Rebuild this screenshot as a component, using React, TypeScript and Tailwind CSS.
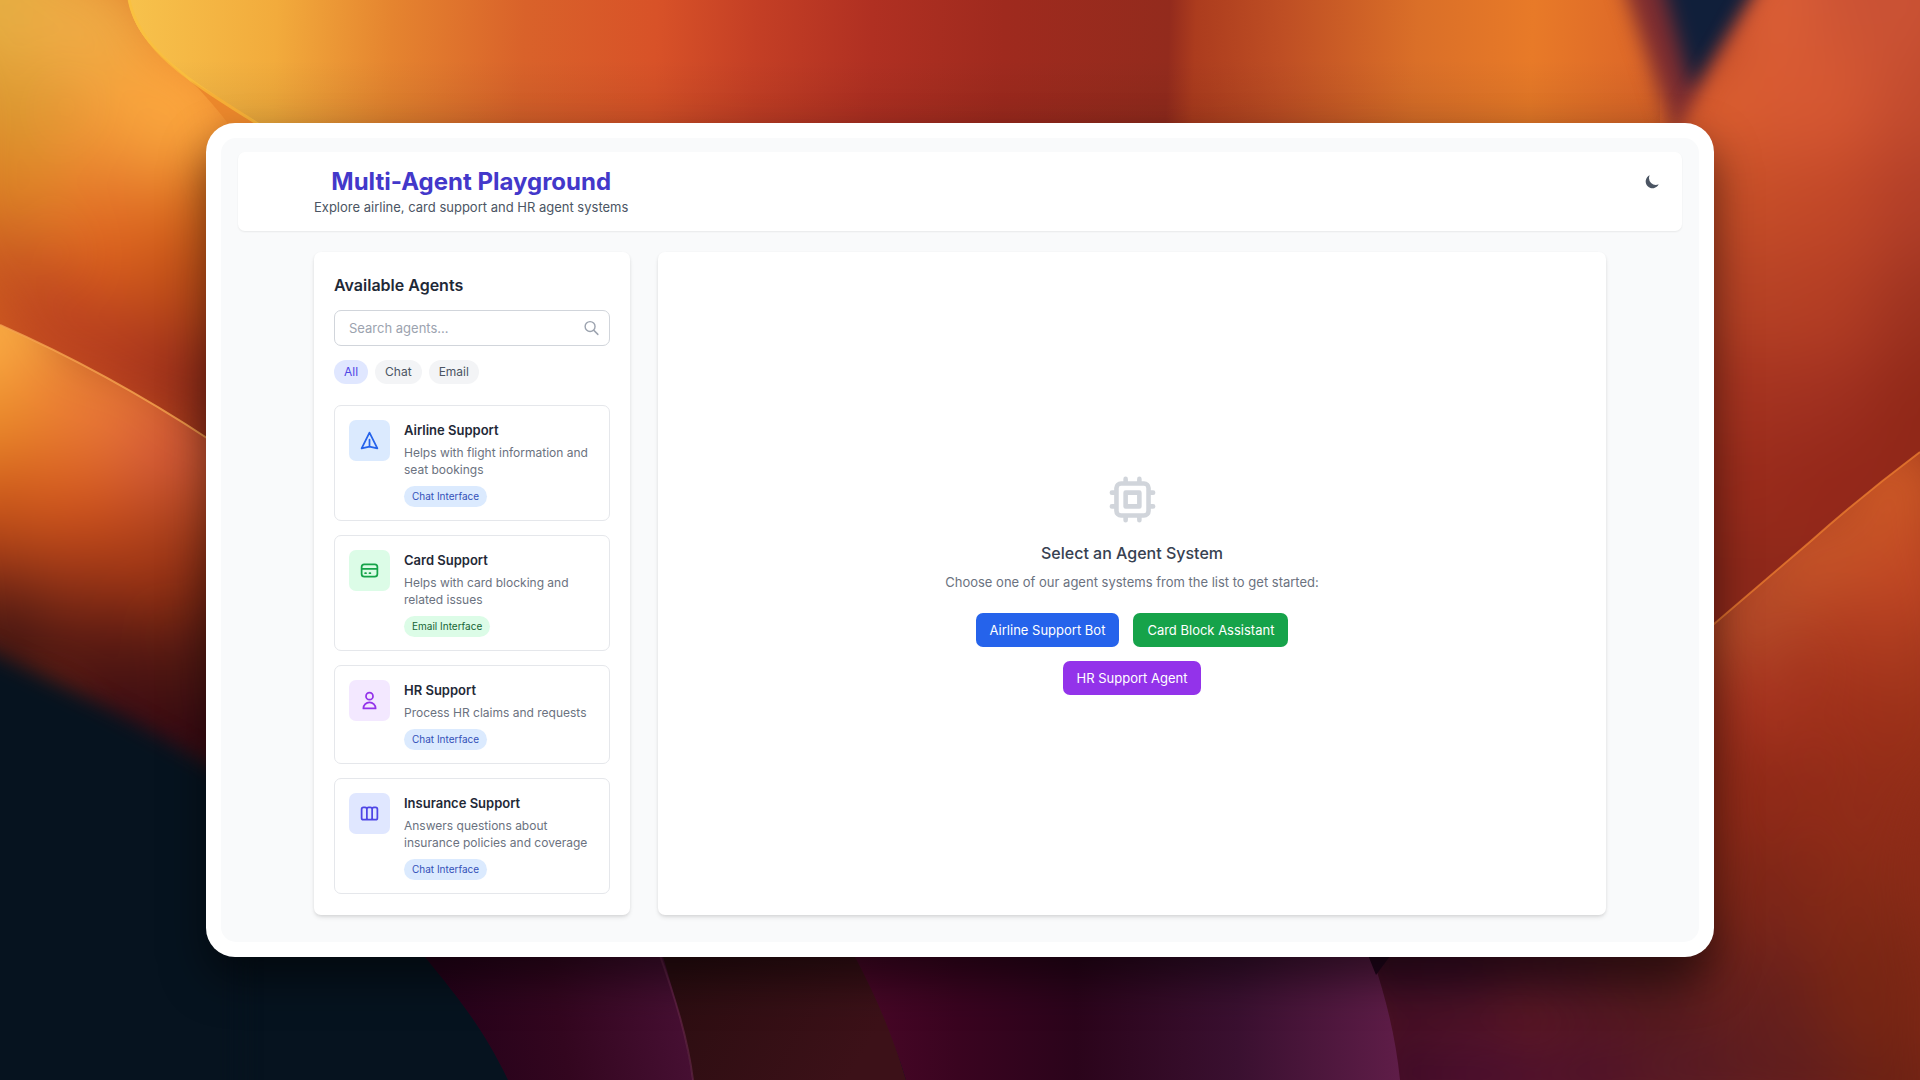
import React, { useState } from "react";

type Blob = [x: number, y: number, r: number, color: string];

interface RegionProps {
  id: string;
  d: string;
  base: string;
  blobs: Blob[];
  soft?: boolean;
}

/* A fold of the wallpaper: a flat shape with soft colour pools clipped to it. */
function Region({ id, d, base, blobs, soft }: RegionProps) {
  return (
    <g filter={soft ? "url(#edge)" : undefined}>
      <clipPath id={id}>
        <path d={d} />
      </clipPath>
      <g clipPath={`url(#${id})`}>
        <path d={d} fill={base} />
        <g filter="url(#pool)">
          {blobs.map(([x, y, r, color], i) => (
            <circle key={i} cx={x} cy={y} r={r} fill={color} />
          ))}
        </g>
      </g>
    </g>
  );
}

function Wallpaper() {
  return (
    <svg
      className="absolute inset-0 h-full w-full"
      viewBox="0 0 1920 1080"
      preserveAspectRatio="xMidYMid slice"
      aria-hidden="true"
    >
      <defs>
        <filter id="pool" filterUnits="userSpaceOnUse" x="-200" y="-200" width="2320" height="1480" colorInterpolationFilters="sRGB">
          <feGaussianBlur stdDeviation="32" />
        </filter>
        <filter id="edge" filterUnits="userSpaceOnUse" x="-200" y="-200" width="2320" height="1480" colorInterpolationFilters="sRGB">
          <feGaussianBlur stdDeviation="10" />
        </filter>
        <linearGradient id="top" gradientUnits="userSpaceOnUse" x1="128" y1="0" x2="1780" y2="60">
          <stop offset="0" stopColor="#f7c24c" />
          <stop offset="0.09" stopColor="#f2ab3c" />
          <stop offset="0.16" stopColor="#e5842f" />
          <stop offset="0.24" stopColor="#d9622a" />
          <stop offset="0.32" stopColor="#d85228" />
          <stop offset="0.38" stopColor="#c43f25" />
          <stop offset="0.45" stopColor="#b03022" />
          <stop offset="0.53" stopColor="#9f2a1e" />
          <stop offset="0.63" stopColor="#932b1d" />
          <stop offset="0.646" stopColor="#ac3c1e" />
          <stop offset="0.7" stopColor="#bf4f24" />
          <stop offset="0.78" stopColor="#da6f28" />
          <stop offset="0.85" stopColor="#e87a28" />
          <stop offset="0.92" stopColor="#dc6628" />
          <stop offset="1" stopColor="#c04c28" />
        </linearGradient>
        <linearGradient id="topShade" x1="0" y1="0" x2="0" y2="1">
          <stop offset="0" stopColor="#000" stopOpacity="0" />
          <stop offset="0.3" stopColor="#000" stopOpacity="0" />
          <stop offset="1" stopColor="#000" stopOpacity="0.16" />
        </linearGradient>
        <linearGradient id="plumA" gradientUnits="userSpaceOnUse" x1="450" y1="1030" x2="690" y2="990">
          <stop offset="0" stopColor="#26021a" />
          <stop offset="0.45" stopColor="#33061f" />
          <stop offset="1" stopColor="#481034" />
        </linearGradient>
        <linearGradient id="plumB" gradientUnits="userSpaceOnUse" x1="680" y1="960" x2="860" y2="1060">
          <stop offset="0" stopColor="#2c0d11" />
          <stop offset="1" stopColor="#3c1118" />
        </linearGradient>
        <linearGradient id="plumC" gradientUnits="userSpaceOnUse" x1="860" y1="1020" x2="1400" y2="1020">
          <stop offset="0" stopColor="#480727" />
          <stop offset="0.18" stopColor="#3a0420" />
          <stop offset="0.4" stopColor="#2b041b" />
          <stop offset="0.7" stopColor="#3a1030" />
          <stop offset="1" stopColor="#5f1d48" />
        </linearGradient>
      </defs>

      <rect width="1920" height="1080" fill="#06131f" />

      {/* Upper band */}
      <rect x="100" width="1760" height="200" fill="url(#top)" />
      <rect x="100" width="1560" height="200" fill="url(#topShade)" />

      {/* Left fold */}
      <Region
        id="left"
        d="M0 0H128C133 28 150 46 166 60C186 78 212 98 244 136V600H0Z"
        base="#d8641f"
        blobs={[
          [0, 0, 90, "#e4ae42"],
          [90, 30, 70, "#eeaa44"],
          [0, 120, 60, "#dc9a32"],
          [170, 120, 80, "#fba63e"],
          [100, 150, 50, "#f09a38"],
          [0, 200, 60, "#db8226"],
          [110, 220, 60, "#e4762a"],
          [220, 220, 60, "#d8681c"],
          [0, 270, 50, "#c85820"],
          [120, 280, 60, "#da601c"],
          [200, 300, 60, "#bc4c18"],
          [60, 330, 60, "#bd4520"],
          [140, 370, 60, "#b03a1e"],
          [220, 390, 60, "#8c2a18"],
          [220, 470, 50, "#8a2a1a"],
        ]}
      />
      <path d="M190 80C204 94 218 110 230 126H262C236 108 210 92 190 80Z" fill="#ec882c" />
      <path d="M129 0C134 24 148 42 162 56C184 78 220 100 258 124" fill="none" stroke="#fbc03c" strokeWidth="3" opacity="0.7" />

      {/* Lower left swoosh */}
      <Region
        id="swoosh"
        d="M0 325C70 356 140 394 210 440V820H0Z"
        base="#8a3014"
        blobs={[
          [110, 440, 90, "#e07030"],
          [-20, 450, 100, "#e88a2c"],
          [60, 540, 90, "#c04c1c"],
          [180, 540, 80, "#a83c1c"],
          [-20, 340, 90, "#f9aa42"],
          [70, 390, 50, "#ee8436"],
          [-10, 440, 60, "#ea8a2a"],
          [110, 430, 50, "#e87838"],
          [180, 460, 60, "#d65c38"],
          [230, 460, 50, "#c85434"],
          [60, 480, 50, "#e06c28"],
          [-10, 520, 60, "#cc581a"],
          [90, 530, 50, "#cc501c"],
          [190, 530, 50, "#b04420"],
          [-10, 580, 50, "#963416"],
          [80, 585, 45, "#983416"],
          [150, 580, 45, "#a03614"],
          [220, 590, 45, "#7c2814"],
          [0, 650, 60, "#441612"],
          [110, 665, 60, "#541812"],
          [210, 665, 50, "#4a1612"],
          [120, 740, 60, "#3a0c14"],
          [215, 750, 50, "#300612"],
        ]}
      />
      <path d="M0 325C70 356 140 394 210 440" fill="none" stroke="#f6a650" strokeWidth="2" opacity="0.8" />
      <g filter="url(#edge)">
        <path d="M-60 628C20 664 120 710 240 782V1140H-60Z" fill="#06131f" />
      </g>

      {/* Navy gap between the upper band and the right fold */}
      <g filter="url(#edge)">
        <path d="M1615 -40H1790L1680 150Z" fill="#7c2c30" />
        <path d="M1655 -40H1780L1692 92Z" fill="#101f3a" />
      </g>

      {/* Right fold */}
      <Region
        id="right"
        soft
        d="M1776 -40L1672 140V760H1980V-40Z"
        base="#8e281a"
        blobs={[
          [1790, 0, 80, "#dc6036"],
          [1900, 0, 90, "#ca5234"],
          [1720, 120, 70, "#dc6030"],
          [1820, 110, 70, "#d65832"],
          [1940, 120, 70, "#c04a2e"],
          [1740, 210, 70, "#c85028"],
          [1840, 220, 70, "#c24828"],
          [1940, 220, 70, "#b03e28"],
          [1740, 310, 70, "#b84426"],
          [1840, 320, 70, "#b43e24"],
          [1940, 320, 70, "#9c3220"],
          [1740, 410, 70, "#a63420"],
          [1840, 410, 60, "#a03020"],
          [1940, 410, 70, "#902818"],
          [1750, 500, 70, "#9a2c1c"],
          [1840, 490, 60, "#94281a"],
          [1740, 590, 60, "#8c281a"],
        ]}
      />

      {/* Lower right fold, running from orange into plum */}
      <Region
        id="lowerRight"
        d="M1920 452C1880 482 1848 508 1811 541L1700 636V900H1340V1080H1920Z"
        base="#8c2a18"
        blobs={[
          [1890, 480, 60, "#c85626"],
          [1800, 560, 60, "#be5028"],
          [1910, 490, 50, "#cc5826"],
          [1830, 560, 50, "#c65428"],
          [1920, 580, 50, "#c24824"],
          [1740, 620, 60, "#b44a28"],
          [1850, 640, 50, "#b03c20"],
          [1930, 660, 50, "#a83a1e"],
          [1760, 710, 50, "#a83420"],
          [1850, 720, 50, "#9e301a"],
          [1930, 740, 50, "#983018"],
          [1760, 800, 60, "#902a18"],
          [1870, 820, 60, "#902c18"],
          [1760, 900, 60, "#7c2618"],
          [1870, 920, 60, "#842a16"],
          [1380, 960, 60, "#340a24"],
          [1460, 960, 60, "#380c26"],
          [1560, 960, 60, "#441224"],
          [1650, 970, 60, "#4c181c"],
          [1770, 1000, 60, "#66201c"],
          [1880, 1000, 70, "#782614"],
          [1400, 1080, 60, "#3c0a28"],
          [1490, 1080, 60, "#480e2e"],
          [1590, 1080, 60, "#4e122a"],
          [1690, 1080, 60, "#561a24"],
          [1790, 1080, 60, "#601e1e"],
          [1900, 1100, 60, "#6c2214"],
        ]}
      />
      <path d="M1920 452C1880 482 1848 508 1811 541L1700 636" fill="none" stroke="#e87a30" strokeWidth="2" opacity="0.8" />

      {/* Bottom folds */}
      <path d="M400 900H660L693 1080H508C484 1030 460 1000 425 957Z" fill="url(#plumA)" />
      <path d="M650 900H850L906 1080H693C686 1036 676 1000 658 940Z" fill="url(#plumB)" />
      <path d="M840 900H1350C1376 960 1394 1020 1400 1080H906C894 1040 878 1000 855 957Z" fill="url(#plumC)" />
      <path d="M1362 940H1402L1376 975Z" fill="#22061c" />
      <path d="M658 950C676 1000 688 1040 693 1080" fill="none" stroke="#6a2a4c" strokeWidth="2" opacity="0.6" />
    </svg>
  );
}

interface IconProps {
  d: string;
  className: string;
}

function OutlineIcon({ d, className }: IconProps) {
  return (
    <svg
      className={className}
      viewBox="0 0 24 24"
      fill="none"
      stroke="currentColor"
      strokeWidth="2"
      strokeLinecap="round"
      strokeLinejoin="round"
      aria-hidden="true"
    >
      <path d={d} />
    </svg>
  );
}

const icons = {
  plane: "M12 19l9 2-9-18-9 18 9-2zm0 0v-8",
  card: "M3 10h18M7 15h1m4 0h1m-7 4h12a3 3 0 003-3V8a3 3 0 00-3-3H6a3 3 0 00-3 3v8a3 3 0 003 3z",
  user: "M16 7a4 4 0 11-8 0 4 4 0 018 0zM12 14a7 7 0 00-7 7h14a7 7 0 00-7-7z",
  boards:
    "M9 17V7m0 10a2 2 0 01-2 2H5a2 2 0 01-2-2V7a2 2 0 012-2h2a2 2 0 012 2m0 10a2 2 0 002 2h2a2 2 0 002-2M9 7a2 2 0 012-2h2a2 2 0 012 2m0 10V7m0 10a2 2 0 002 2h2a2 2 0 002-2V7a2 2 0 00-2-2h-2a2 2 0 00-2 2",
  search: "M21 21l-6-6m2-5a7 7 0 11-14 0 7 7 0 0114 0z",
  chip: "M9 3v2m6-2v2M9 19v2m6-2v2M5 9H3m2 6H3m18-6h-2m2 6h-2M7 19h10a2 2 0 002-2V7a2 2 0 00-2-2H7a2 2 0 00-2 2v10a2 2 0 002 2zM9 9h6v6H9V9z",
};

type Kind = "Chat" | "Email";

interface Agent {
  name: string;
  text: string;
  kind: Kind;
  icon: string;
  tone: string;
}

const agents: Agent[] = [
  {
    name: "Airline Support",
    text: "Helps with flight information and seat bookings",
    kind: "Chat",
    icon: icons.plane,
    tone: "bg-[#dbeafe] text-[#2563eb]",
  },
  {
    name: "Card Support",
    text: "Helps with card blocking and related issues",
    kind: "Email",
    icon: icons.card,
    tone: "bg-[#dcfce7] text-[#16a34a]",
  },
  {
    name: "HR Support",
    text: "Process HR claims and requests",
    kind: "Chat",
    icon: icons.user,
    tone: "bg-[#f3e8ff] text-[#9333ea]",
  },
  {
    name: "Insurance Support",
    text: "Answers questions about insurance policies and coverage",
    kind: "Chat",
    icon: icons.boards,
    tone: "bg-[#e0e7ff] text-[#4f46e5]",
  },
];

const badgeTone: Record<Kind, string> = {
  Chat: "bg-[#dbeafe] text-[#3350b8]",
  Email: "bg-[#dcfce7] text-[#166534]",
};

const filters = ["All", "Chat", "Email"] as const;

const launchers = [
  { label: "Airline Support Bot", tone: "bg-[#2563eb]" },
  { label: "Card Block Assistant", tone: "bg-[#16a34a]" },
  { label: "HR Support Agent", tone: "bg-[#9333ea]" },
];

function AgentCard({ agent }: { agent: Agent }) {
  return (
    <li>
      <button type="button" className="flex w-full items-start gap-3.5 rounded-[7px] border border-[#e5e7eb] px-3.5 pt-3.5 pb-[13px] text-left">
        <span className={`flex size-[41px] shrink-0 items-center justify-center rounded-[7px] ${agent.tone}`}>
          <OutlineIcon d={agent.icon} className="size-[21px]" />
        </span>
        <span className="flex min-w-0 flex-col items-start">
          <span className="text-[13px] leading-5 font-semibold text-[#1f2937]">{agent.name}</span>
          <span className="mt-1 text-[12px] leading-[17px] text-[#6b7280]">{agent.text}</span>
          <span className={`mt-2 rounded-full px-2 text-[10px] leading-[21px] ${badgeTone[agent.kind]}`}>
            {agent.kind} Interface
          </span>
        </span>
      </button>
    </li>
  );
}

export default function App() {
  const [filter, setFilter] = useState<(typeof filters)[number]>("All");
  const [query, setQuery] = useState("");

  const shown = agents.filter(
    (a) => (filter === "All" || a.kind === filter) && a.name.toLowerCase().includes(query.toLowerCase()),
  );

  return (
    <div className="relative flex min-h-screen overflow-hidden px-[206px] py-[123px] font-[Inter,'Liberation_Sans',sans-serif]">
      <Wallpaper />

      <div className="relative flex flex-1 rounded-[29px] bg-white p-[15px] shadow-[0_22px_44px_rgba(0,0,0,0.5)]">
        <div className="flex flex-1 flex-col rounded-[15px] bg-[#f9fafb] px-[17px] pt-3.5 pb-[27px]">
          <header className="flex items-start justify-between rounded-[7px] bg-white py-3.5 pr-[21px] pl-[76px] shadow-[0_1px_2px_rgba(0,0,0,0.07)]">
            <div className="text-center">
              <h1 className="text-[24px] leading-[31px] font-bold text-[#4338ca]">Multi-Agent Playground</h1>
              <p className="text-[13px] leading-5 text-[#4b5563]">Explore airline, card support and HR agent systems</p>
            </div>
            <button type="button" aria-label="Toggle dark mode" className="flex h-[31px] items-center text-[#4b5563]">
              <svg className="size-[17px]" viewBox="0 0 20 20" fill="currentColor" aria-hidden="true">
                <path d="M17.293 13.293A8 8 0 016.707 2.707a8.001 8.001 0 1010.586 10.586z" />
              </svg>
            </button>
          </header>

          <main className="mx-auto mt-[21px] grid w-full max-w-[1292px] flex-1 grid-cols-[1fr_3fr] gap-7">
            <aside className="rounded-[7px] bg-white px-5 py-[21px] shadow-[0_3px_5px_-1px_rgba(0,0,0,0.12),0_1px_3px_rgba(0,0,0,0.06)]">
              <h2 className="text-[16px] leading-6 font-semibold text-[#1f2937]">Available Agents</h2>

              <div className="relative mt-[13px]">
                <input
                  type="text"
                  aria-label="Search agents"
                  placeholder="Search agents..."
                  value={query}
                  onChange={(e) => setQuery(e.target.value)}
                  className="block h-9 w-full rounded-[7px] border border-[#d1d5db] bg-white pr-10 pl-3.5 text-[13px] text-[#1f2937] placeholder:text-[#9ca3af]"
                />
                <OutlineIcon
                  d={icons.search}
                  className="pointer-events-none absolute top-1/2 right-[10px] size-[17px] -translate-y-1/2 text-[#9ca3af]"
                />
              </div>

              <div className="mt-3.5 flex gap-[7px]">
                {filters.map((name) => (
                  <button
                    key={name}
                    type="button"
                    aria-pressed={filter === name}
                    onClick={() => setFilter(name)}
                    className={`rounded-full px-[10px] text-[12px] leading-6 ${
                      filter === name ? "bg-[#e0e7ff] text-[#4f46e5]" : "bg-[#f3f4f6] text-[#4b5563]"
                    }`}
                  >
                    {name}
                  </button>
                ))}
              </div>

              <ul className="mt-[21px] flex flex-col gap-3.5">
                {shown.map((agent) => (
                  <AgentCard key={agent.name} agent={agent} />
                ))}
              </ul>
            </aside>

            <section className="flex flex-col items-center justify-center rounded-[7px] bg-white text-center shadow-[0_3px_5px_-1px_rgba(0,0,0,0.12),0_1px_3px_rgba(0,0,0,0.06)]">
              <OutlineIcon d={icons.chip} className="size-[55px] text-[#d1d5db]" />
              <h2 className="mt-3.5 text-[16px] leading-6 font-medium text-[#374151]">Select an Agent System</h2>
              <p className="mt-[7px] text-[13px] leading-5 text-[#6b7280]">
                Choose one of our agent systems from the list to get started:
              </p>
              <div className="mt-[21px] flex max-w-[385px] flex-wrap justify-center gap-3.5">
                {launchers.map(({ label, tone }) => (
                  <button
                    key={label}
                    type="button"
                    className={`rounded-[7px] px-3.5 py-[7px] text-[13px] leading-5 text-white ${tone}`}
                  >
                    {label}
                  </button>
                ))}
              </div>
            </section>
          </main>
        </div>
      </div>
    </div>
  );
}
